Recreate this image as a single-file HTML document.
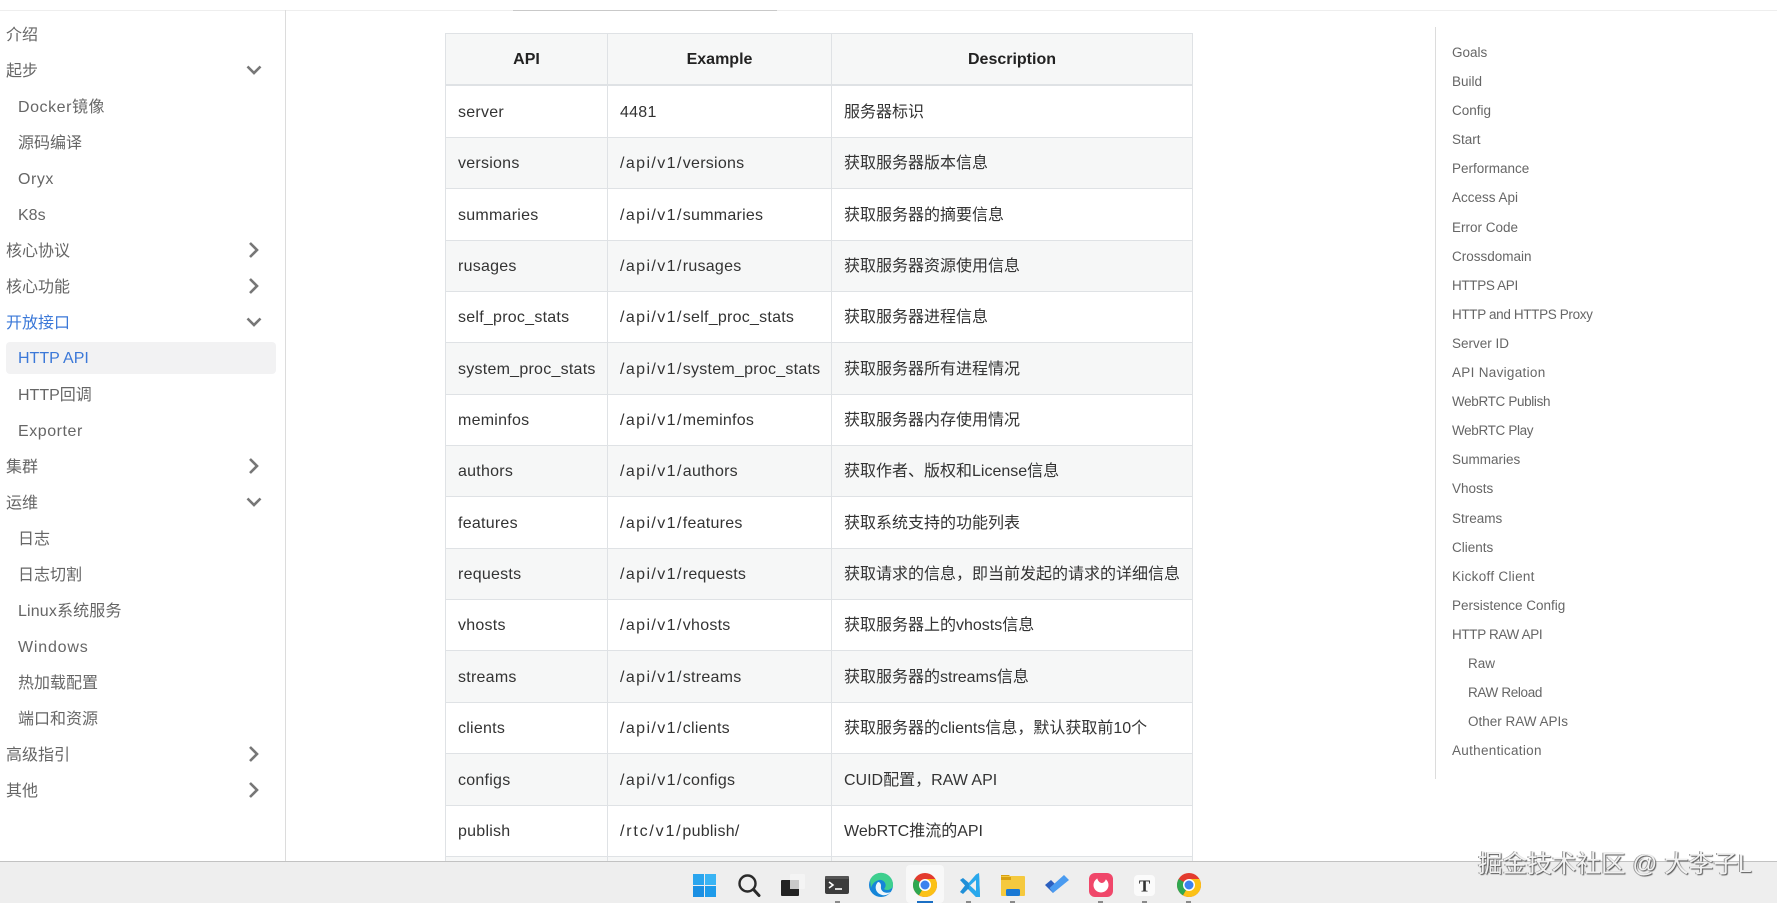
<!DOCTYPE html>
<html lang="zh-CN">
<head>
<meta charset="utf-8">
<title>HTTP API</title>
<style>
*{box-sizing:border-box}
html,body{margin:0;padding:0;width:1777px;height:903px;overflow:hidden;background:#fff}
body{position:relative;font-family:"Liberation Sans","Noto Sans CJK SC",sans-serif;color:#333}
.topline{position:absolute;left:0;top:10px;width:1777px;height:1px;background:#eeeeee}
.topdark{position:absolute;left:513px;top:10px;width:264px;height:1px;background:#c9c9c9}
.side{position:absolute;left:0;top:10px;width:286px;height:851px;border-right:1px solid #dcdcdc}
.side ul{list-style:none;margin:0;padding:0;position:absolute;left:0;top:8px;width:285px}
.side li{position:relative;height:36px;line-height:36px;font-size:16px;color:#666;padding-left:6px;white-space:nowrap}
.side li.c{padding-left:18px}
.side li.on{color:#3b78d8}
.side li.hl::before{content:"";position:absolute;left:6px;top:0;width:270px;height:32px;background:#f2f2f3;border-radius:4px}
.side li span{position:relative}
.side li.hl span{top:-1px}
.side li .w{letter-spacing:.55px}
.side li .y{letter-spacing:.15px}
.side li .x{letter-spacing:.8px}
.side svg{position:absolute;left:244px;top:6px}
table{position:absolute;left:445px;top:33px;width:748px;table-layout:fixed;border-collapse:separate;border-spacing:0;font-size:16px;color:#333}
td,th{border-right:1px solid #dfe2e5;border-bottom:1px solid #dfe2e5;padding:0 0 0 12px;white-space:nowrap;overflow:hidden;vertical-align:middle}
tr td:first-child,tr th:first-child{border-left:1px solid #dfe2e5}
th{height:53px;background:#f6f7f7;border-top:1px solid #dfe2e5;border-bottom:2px solid #dfe2e5;padding:2px 0 0;text-align:center;font-weight:700;color:#222}
td:nth-child(1),td:nth-child(2){padding-top:2px;letter-spacing:.25px}
td:nth-child(3){padding-bottom:4px}
td .p{letter-spacing:1.4px}
td .r{letter-spacing:1.8px}
tr.a td{height:51px}
tr.b td{height:52px}
tr.f td{height:52px}
tbody tr:nth-child(even) td{background:#f6f7f7}
.toc{position:absolute;left:1435px;top:27px;width:200px;height:752px;border-left:1px solid #dcdcdc}
.toc ul{list-style:none;margin:0;padding:0;position:absolute;left:16px;top:11px}
.toc li{height:29.1px;line-height:29px;font-size:13.5px;color:#666;white-space:nowrap}
.toc li.s{padding-left:16px}
.toc li.n{letter-spacing:-.35px}
.toc li.m{letter-spacing:.3px}
.bar{position:absolute;left:0;top:861px;width:1777px;height:42px;background:#eeeeee;border-top:1px solid #c2c2c2}
.bar svg{position:absolute;left:0;top:-1px}
.wm{position:absolute;left:1478px;top:850px;font-size:24.6px;line-height:30px;color:#f1f1f1;white-space:nowrap;text-shadow:1px 1px 1px #555,-1px 0 0 #999}
</style>
</head>
<body>
<div class="topline"></div>
<div class="topdark"></div>

<nav class="side">
<ul>
<li><span>介绍</span></li>
<li><span>起步</span><svg width="24" height="20" viewBox="0 0 24 20"><path d="M3.500 6.500 L10 13 L16.500 6.500" fill="none" stroke="#777" stroke-width="2.600"/></svg></li>
<li class="c"><span class="w">Docker镜像</span></li>
<li class="c"><span>源码编译</span></li>
<li class="c"><span class="w">Oryx</span></li>
<li class="c"><span>K8s</span></li>
<li><span>核心协议</span><svg width="24" height="20" viewBox="0 0 24 20"><path d="M6 3 L13 10 L6 17" fill="none" stroke="#777" stroke-width="2.600"/></svg></li>
<li><span>核心功能</span><svg width="24" height="20" viewBox="0 0 24 20"><path d="M6 3 L13 10 L6 17" fill="none" stroke="#777" stroke-width="2.600"/></svg></li>
<li class="on"><span>开放接口</span><svg width="24" height="20" viewBox="0 0 24 20"><path d="M3.500 6.500 L10 13 L16.500 6.500" fill="none" stroke="#777" stroke-width="2.600"/></svg></li>
<li class="c on hl"><span>HTTP API</span></li>
<li class="c"><span>HTTP回调</span></li>
<li class="c"><span class="w">Exporter</span></li>
<li><span>集群</span><svg width="24" height="20" viewBox="0 0 24 20"><path d="M6 3 L13 10 L6 17" fill="none" stroke="#777" stroke-width="2.600"/></svg></li>
<li><span>运维</span><svg width="24" height="20" viewBox="0 0 24 20"><path d="M3.500 6.500 L10 13 L16.500 6.500" fill="none" stroke="#777" stroke-width="2.600"/></svg></li>
<li class="c"><span>日志</span></li>
<li class="c"><span>日志切割</span></li>
<li class="c"><span class="y">Linux系统服务</span></li>
<li class="c"><span class="x">Windows</span></li>
<li class="c"><span>热加载配置</span></li>
<li class="c"><span>端口和资源</span></li>
<li><span>高级指引</span><svg width="24" height="20" viewBox="0 0 24 20"><path d="M6 3 L13 10 L6 17" fill="none" stroke="#777" stroke-width="2.600"/></svg></li>
<li><span>其他</span><svg width="24" height="20" viewBox="0 0 24 20"><path d="M6 3 L13 10 L6 17" fill="none" stroke="#777" stroke-width="2.600"/></svg></li>
</ul>
</nav>

<table>
<colgroup><col style="width:163px"><col style="width:224px"><col style="width:361px"></colgroup>
<thead><tr><th>API</th><th>Example</th><th>Description</th></tr></thead>
<tbody>
<tr class="f"><td>server</td><td>4481</td><td>服务器标识</td></tr>
<tr class="a"><td>versions</td><td><span class="p">/api/v1/</span>versions</td><td>获取服务器版本信息</td></tr>
<tr class="b"><td>summaries</td><td><span class="p">/api/v1/</span>summaries</td><td>获取服务器的摘要信息</td></tr>
<tr class="a"><td>rusages</td><td><span class="p">/api/v1/</span>rusages</td><td>获取服务器资源使用信息</td></tr>
<tr class="a"><td>self_proc_stats</td><td><span class="p">/api/v1/</span>self_proc_stats</td><td>获取服务器进程信息</td></tr>
<tr class="b"><td>system_proc_stats</td><td><span class="p">/api/v1/</span>system_proc_stats</td><td>获取服务器所有进程情况</td></tr>
<tr class="a"><td>meminfos</td><td><span class="p">/api/v1/</span>meminfos</td><td>获取服务器内存使用情况</td></tr>
<tr class="a"><td>authors</td><td><span class="p">/api/v1/</span>authors</td><td>获取作者、版权和License信息</td></tr>
<tr class="b"><td>features</td><td><span class="p">/api/v1/</span>features</td><td>获取系统支持的功能列表</td></tr>
<tr class="a"><td>requests</td><td><span class="p">/api/v1/</span>requests</td><td>获取请求的信息，即当前发起的请求的详细信息</td></tr>
<tr class="a"><td>vhosts</td><td><span class="p">/api/v1/</span>vhosts</td><td>获取服务器上的vhosts信息</td></tr>
<tr class="b"><td>streams</td><td><span class="p">/api/v1/</span>streams</td><td>获取服务器的streams信息</td></tr>
<tr class="a"><td>clients</td><td><span class="p">/api/v1/</span>clients</td><td>获取服务器的clients信息，默认获取前10个</td></tr>
<tr class="b"><td>configs</td><td><span class="p">/api/v1/</span>configs</td><td>CUID配置，RAW API</td></tr>
<tr class="a"><td>publish</td><td><span class="r">/rtc/v1/</span>publish/</td><td>WebRTC推流的API</td></tr>
<tr class="a"><td></td><td></td><td></td></tr>
</tbody>
</table>

<aside class="toc">
<ul>
<li>Goals</li><li>Build</li><li>Config</li><li>Start</li><li>Performance</li><li>Access Api</li><li>Error Code</li><li>Crossdomain</li><li class="n">HTTPS API</li><li class="n">HTTP and HTTPS Proxy</li><li>Server ID</li><li class="m">API Navigation</li><li class="n">WebRTC Publish</li><li class="n">WebRTC Play</li><li>Summaries</li><li>Vhosts</li><li>Streams</li><li>Clients</li><li class="m">Kickoff Client</li><li>Persistence Config</li><li class="n">HTTP RAW API</li><li class="s">Raw</li><li class="s n">RAW Reload</li><li class="s">Other RAW APIs</li><li class="m">Authentication</li>
</ul>
</aside>

<div class="bar">
<svg width="1777" height="42" viewBox="0 861 1777 42">
<rect x="906" y="865" width="38" height="38" rx="4" fill="#f8f8f8"/>
<!-- start -->
<rect x="693" y="874" width="11" height="11" fill="#2aa5ee"/><rect x="705" y="874" width="11" height="11" fill="#3ab4f4"/>
<rect x="693" y="886" width="11" height="11" fill="#1a8fe3"/><rect x="705" y="886" width="11" height="11" fill="#1e9bea"/>
<!-- search -->
<circle cx="747.500" cy="883.500" r="8" fill="none" stroke="#2a2a2a" stroke-width="2.400"/><path d="M753.500 889.500 L759 895.500" stroke="#2a2a2a" stroke-width="3" stroke-linecap="round"/>
<!-- task view -->
<rect x="790" y="874" width="15" height="15" rx="1.500" fill="#f4f4f4"/>
<rect x="781" y="880" width="18" height="16" rx="1" fill="#222"/>
<rect x="790" y="880" width="9" height="9" fill="#c9c9c9"/>
<!-- terminal -->
<rect x="825" y="876" width="24" height="18" rx="2" fill="#3c3c3c"/>
<rect x="825" y="876" width="24" height="3" rx="1" fill="#555"/>
<path d="M829 882 L833 885 L829 888" fill="none" stroke="#fff" stroke-width="1.600"/><path d="M835 889 H842" stroke="#fff" stroke-width="1.600"/>
<!-- edge -->
<circle cx="881" cy="885" r="12" fill="#1585d8"/>
<path d="M870 880 A12 12 0 0 1 893 885 C893 890 886 891 884 889 C888 885 884 879 879 880 C875 881 872 884 871 888 Z" fill="#3ecf8e"/>
<path d="M878 882 C874 886 875 893 882 895 C886 896 889 894 891 892 C886 894 880 892 881 886 C881 884 880 882 878 882 Z" fill="#eef6fb"/>
<!-- chrome active -->
<circle cx="925" cy="885" r="12" fill="#e33b2e"/>
<path d="M925 885 L914.600 879 A12 12 0 0 0 919 895.400 Z" fill="#2fa84f"/>
<path d="M925 885 L919 895.400 A12 12 0 0 0 935.400 879 L925 879 Z" fill="#fbc116"/>
<circle cx="925" cy="885" r="6" fill="#fff"/><circle cx="925" cy="885" r="4.500" fill="#3b82ee"/>
<!-- vscode -->
<g transform="translate(-1 0)">
<path d="M961 880 L964 878 L970 883 L980 873 L981 897 L977 897 L969 889 L964 894 L961 892 L966 885.500 Z" fill="#1f8fd8"/>
<path d="M980 873 L981 897 L977 897 L970 889.500 L970 882.500 L977 874.500 Z" fill="#29a8ec"/>
<path d="M977 880 L971 885.500 L977 891 Z" fill="#eeeeee"/>
</g>
<!-- explorer -->
<path d="M1001 875 H1009 L1012 878 H1001 Z" fill="#d8a010"/>
<rect x="1001" y="876" width="24" height="20" rx="1" fill="#f5c93e"/>
<rect x="1001" y="877" width="10" height="3" fill="#d8a010"/>
<rect x="1006" y="889" width="14" height="7" rx="1.500" fill="#1a78d4"/>
<!-- todo -->
<path d="M1045 885 L1051 880 L1055 884 L1053 893 Z" fill="#2b5fbf"/>
<path d="M1053 893 L1049.500 888 L1064 875 L1069 880 Z" fill="#4a9bf0"/>
<!-- red app -->
<rect x="1089" y="873" width="24" height="24" rx="6" fill="#f0476a"/>
<circle cx="1101" cy="885" r="7.500" fill="#fff"/>
<path d="M1097 877 C1098 884 1104 885 1106 879 C1104 876 1100 876 1097 877 Z" fill="#f0476a"/>
<!-- T -->
<rect x="1134" y="875" width="21" height="21" rx="4" fill="#fbfbfb"/>
<text x="1144.500" y="891.500" text-anchor="middle" font-family="Liberation Serif,serif" font-weight="700" font-size="17" fill="#333">T</text>
<!-- chrome -->
<circle cx="1189" cy="885" r="12" fill="#e33b2e"/>
<path d="M1189 885 L1178.600 879 A12 12 0 0 0 1183 895.400 Z" fill="#2fa84f"/>
<path d="M1189 885 L1183 895.400 A12 12 0 0 0 1199.400 879 L1189 879 Z" fill="#fbc116"/>
<circle cx="1189" cy="885" r="6" fill="#fff"/><circle cx="1189" cy="885" r="4.500" fill="#3b82ee"/>
<!-- indicators -->
<g fill="#8a8a8a">
<rect x="835" y="901" width="5" height="2"/><rect x="966" y="901" width="5" height="2"/><rect x="1010" y="901" width="5" height="2"/><rect x="1098" y="901" width="5" height="2"/><rect x="1142" y="901" width="5" height="2"/><rect x="1186" y="901" width="5" height="2"/>
</g>
<rect x="917" y="901" width="16" height="2" fill="#1a6fc4"/>
</svg>
</div>
<div class="wm">掘金技术社区 @ 大李子L</div>
</body>
</html>
